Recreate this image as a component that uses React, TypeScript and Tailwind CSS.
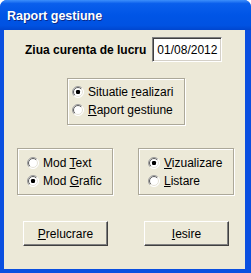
import React from "react";

const font = "font-['Liberation_Sans',Arial,sans-serif]";

const Radio = ({ checked }: { checked?: boolean }) => (
  <svg width="12" height="12" viewBox="0 0 12 12" className="shrink-0">
    <defs>
      <linearGradient id="ro" x1="0" y1="0" x2="1" y2="1">
        <stop offset="0.45" stopColor="#9a9a9a" />
        <stop offset="0.55" stopColor="#ffffff" />
      </linearGradient>
      <linearGradient id="ri" x1="0" y1="0" x2="1" y2="1">
        <stop offset="0.45" stopColor="#5a5a5a" />
        <stop offset="0.55" stopColor="#e4e1d6" />
      </linearGradient>
    </defs>
    <circle cx="6" cy="6" r="5.5" fill="#fff" stroke="url(#ro)" strokeWidth="1" />
    <circle cx="6" cy="6" r="4.5" fill="#fff" stroke="url(#ri)" strokeWidth="1" />
    {checked && <rect x="4" y="4" width="4" height="4" rx="1.2" fill="#000" />}
  </svg>
);

const Option = ({
  checked,
  pre,
  acc,
  post,
}: {
  checked?: boolean;
  pre?: string;
  acc: string;
  post: string;
}) => (
  <div className="flex items-center h-[18px] gap-[4px]">
    <Radio checked={checked} />
    <span className="text-[12px] leading-none whitespace-pre">
      {pre}
      <u>{acc}</u>
      {post}
    </span>
  </div>
);

const Group = ({ className, children }: { className: string; children: React.ReactNode }) => (
  <div
    className={`border border-[#aca899] shadow-[inset_1px_1px_0_#fff,1px_1px_0_#fff] flex flex-col ${className}`}
  >
    {children}
  </div>
);

const Button = ({ acc, post }: { acc: string; post: string }) => (
  <button className="w-[85px] h-[25px] bg-[#ece9d8] border border-t-white border-l-white border-r-[#404040] border-b-[#404040] shadow-[inset_-1px_-1px_0_#808080] text-[12px] text-black flex items-center justify-center">
    <span>
      <u>{acc}</u>
      {post}
    </span>
  </button>
);

export default function App() {
  return (
    <div className={`w-[251px] h-[273px] flex flex-col bg-[#0a4fe0] rounded-t-[7px] overflow-hidden ${font}`}>
      {/* TITLE BAR */}
      <div className="h-[30px] shrink-0 flex items-center pl-[7px] pt-[3px] bg-[linear-gradient(to_bottom,#3d8ffb_0%,#0a5fec_12%,#0055e6_50%,#0052e2_85%,#0046cf_100%)]">
        <span className="text-white font-bold text-[12.5px] [text-shadow:1px_1px_0_#0a2a8a]">
          Raport gestiune
        </span>
      </div>

      {/* BODY */}
      <div className="flex-1 ml-[4px] mr-[6px] mb-[4px] bg-[#ece9d8] text-black flex flex-col pt-[7px]">
        <div className="flex items-center pl-[21px] gap-[6px]">
          <span className="font-bold text-[12px]">Ziua curenta de lucru</span>
          <div className="w-[70px] h-[25px] bg-white border border-t-[#808080] border-l-[#808080] border-r-white border-b-white shadow-[inset_1px_1px_0_#404040,inset_-1px_-1px_0_#d4d0c8] flex items-center pl-[4px] text-[12px]">
            01/08/2012
          </div>
        </div>

        <Group className="mt-[16px] ml-[63px] w-[118px] h-[47px] pl-[4px] pt-[4px]">
          <Option checked pre="Situatie " acc="r" post="ealizari" />
          <Option acc="R" post="aport gestiune" />
        </Group>

        <div className="flex mt-[23px] pl-[13px] gap-[25px]">
          <Group className="w-[96px] h-[47px] pl-[9px] pt-[5px]">
            <Option pre="Mod " acc="T" post="ext" />
            <Option checked pre="Mod " acc="G" post="rafic" />
          </Group>
          <Group className="w-[96px] h-[47px] pl-[9px] pt-[5px]">
            <Option checked acc="V" post="izualizare" />
            <Option acc="L" post="istare" />
          </Group>
        </div>

        <div className="flex mt-[26px] pl-[19px] gap-[36px]">
          <Button acc="P" post="relucrare" />
          <Button acc="I" post="esire" />
        </div>
      </div>
    </div>
  );
}
